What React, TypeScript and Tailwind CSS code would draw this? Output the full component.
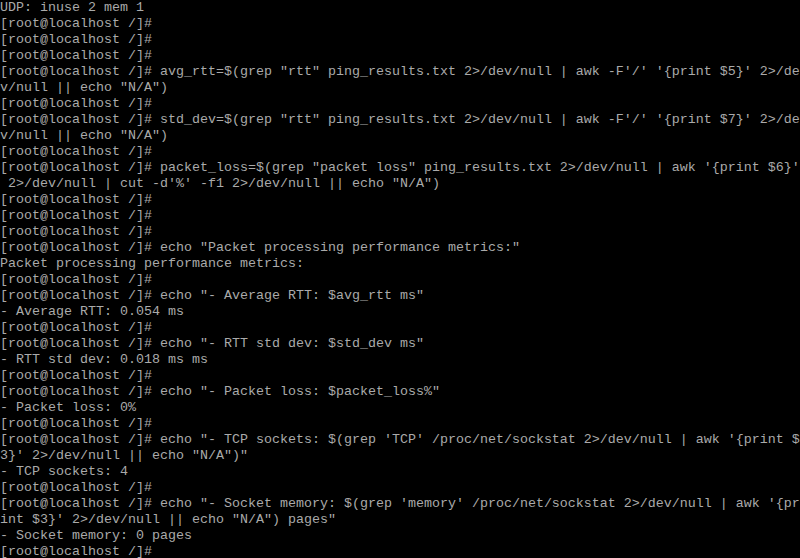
const lines = [
  "UDP: inuse 2 mem 1",
  "[root@localhost /]#",
  "[root@localhost /]#",
  "[root@localhost /]#",
  "[root@localhost /]# avg_rtt=$(grep \"rtt\" ping_results.txt 2>/dev/null | awk -F'/' '{print $5}' 2>/de",
  "v/null || echo \"N/A\")",
  "[root@localhost /]#",
  "[root@localhost /]# std_dev=$(grep \"rtt\" ping_results.txt 2>/dev/null | awk -F'/' '{print $7}' 2>/de",
  "v/null || echo \"N/A\")",
  "[root@localhost /]#",
  "[root@localhost /]# packet_loss=$(grep \"packet loss\" ping_results.txt 2>/dev/null | awk '{print $6}'",
  " 2>/dev/null | cut -d'%' -f1 2>/dev/null || echo \"N/A\")",
  "[root@localhost /]#",
  "[root@localhost /]#",
  "[root@localhost /]#",
  "[root@localhost /]# echo \"Packet processing performance metrics:\"",
  "Packet processing performance metrics:",
  "[root@localhost /]#",
  "[root@localhost /]# echo \"- Average RTT: $avg_rtt ms\"",
  "- Average RTT: 0.054 ms",
  "[root@localhost /]#",
  "[root@localhost /]# echo \"- RTT std dev: $std_dev ms\"",
  "- RTT std dev: 0.018 ms ms",
  "[root@localhost /]#",
  "[root@localhost /]# echo \"- Packet loss: $packet_loss%\"",
  "- Packet loss: 0%",
  "[root@localhost /]#",
  "[root@localhost /]# echo \"- TCP sockets: $(grep 'TCP' /proc/net/sockstat 2>/dev/null | awk '{print $",
  "3}' 2>/dev/null || echo \"N/A\")\"",
  "- TCP sockets: 4",
  "[root@localhost /]#",
  "[root@localhost /]# echo \"- Socket memory: $(grep 'memory' /proc/net/sockstat 2>/dev/null | awk '{pr",
  "int $3}' 2>/dev/null || echo \"N/A\") pages\"",
  "- Socket memory: 0 pages",
  "[root@localhost /]#",
];

export default function App() {
  return (
    <div className="w-[800px] h-[558px] overflow-hidden bg-black text-[#aaaaaa] font-['Liberation_Mono',monospace] text-[13.333px] leading-4">
      {lines.map((line, i) => (
        <div key={i} className="h-4 whitespace-pre">
          {line}
        </div>
      ))}
    </div>
  );
}
